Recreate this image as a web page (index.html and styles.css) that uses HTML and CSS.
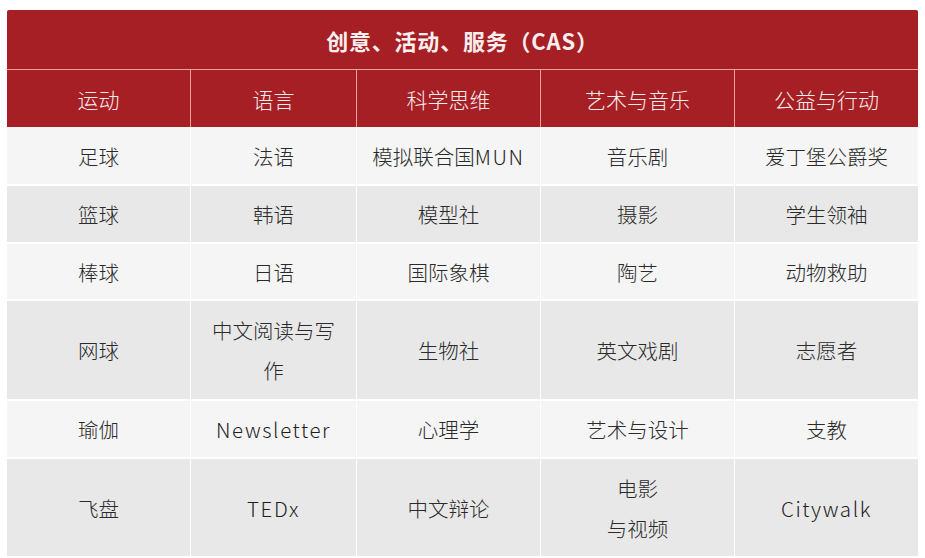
FILE: index.html
```html
<!DOCTYPE html>
<html lang="zh">
<head>
<meta charset="utf-8">
<link rel="stylesheet" href="styles.css">
</head>
<body>
<div class="table">
  <div class="title">创意、活动、服务（CAS）</div>
  <div class="head">
    <div>运动</div><div>语言</div><div>科学思维</div><div>艺术与音乐</div><div>公益与行动</div>
  </div>
  <div class="body">
    <div class="c odd">足球</div><div class="c odd">法语</div><div class="c odd">模拟联合国<span class="lat">MUN</span></div><div class="c odd">音乐剧</div><div class="c odd">爱丁堡公爵奖</div>
    <div class="c even">篮球</div><div class="c even">韩语</div><div class="c even">模型社</div><div class="c even">摄影</div><div class="c even">学生领袖</div>
    <div class="c odd">棒球</div><div class="c odd">日语</div><div class="c odd">国际象棋</div><div class="c odd">陶艺</div><div class="c odd">动物救助</div>
    <div class="c even">网球</div><div class="c even">中文阅读与写<br>作</div><div class="c even">生物社</div><div class="c even">英文戏剧</div><div class="c even">志愿者</div>
    <div class="c odd">瑜伽</div><div class="c odd lat">Newsletter</div><div class="c odd">心理学</div><div class="c odd">艺术与设计</div><div class="c odd">支教</div>
    <div class="c even">飞盘</div><div class="c even lat">TEDx</div><div class="c even">中文辩论</div><div class="c even">电影<br>与视频</div><div class="c even lat">Citywalk</div>
  </div>
</div>
</body>
</html>
```
FILE: styles.css
```css
html, body {
  margin: 0;
  padding: 0;
  background: #ffffff;
}
body {
  font-family: "Noto Sans CJK SC", "Noto Sans", sans-serif;
  padding: 10px 0 0 7px;
}
.table {
  width: 911px;
}
.title {
  height: 59px;
  background: #a51f24;
  color: #fbeeee;
  font-size: 22px;
  font-weight: bold;
  letter-spacing: 0.8px;
  display: flex;
  align-items: center;
  justify-content: center;
  border-radius: 2px 2px 0 0;
  border-bottom: 1px solid #f2a09c;
}
.head {
  display: grid;
  grid-template-columns: 183px 165px 183px 193px 183px;
  column-gap: 1px;
  background: #f2a09c;
  height: 57px;
}
.head > div {
  background: #a51f24;
  color: #f8ebeb;
  font-size: 21px;
  font-weight: 300;
  display: flex;
  align-items: center;
  justify-content: center;
}
.body {
  display: grid;
  grid-template-columns: 183px 165px 183px 193px 183px;
  grid-template-rows: 57px 56px 55px 98px 56px 97px;
  gap: 2px 1px;
  background: #ffffff;
}
.c {
  display: flex;
  align-items: center;
  justify-content: center;
  text-align: center;
  font-size: 20.5px;
  font-weight: 300;
  color: #2a2a2a;
  line-height: 40px;
}
.odd { background: #f5f5f5; }
.even { background: #e8e8e8; }
.lat {
  letter-spacing: 1.6px;
  color: #1e1e1e;
}
```
